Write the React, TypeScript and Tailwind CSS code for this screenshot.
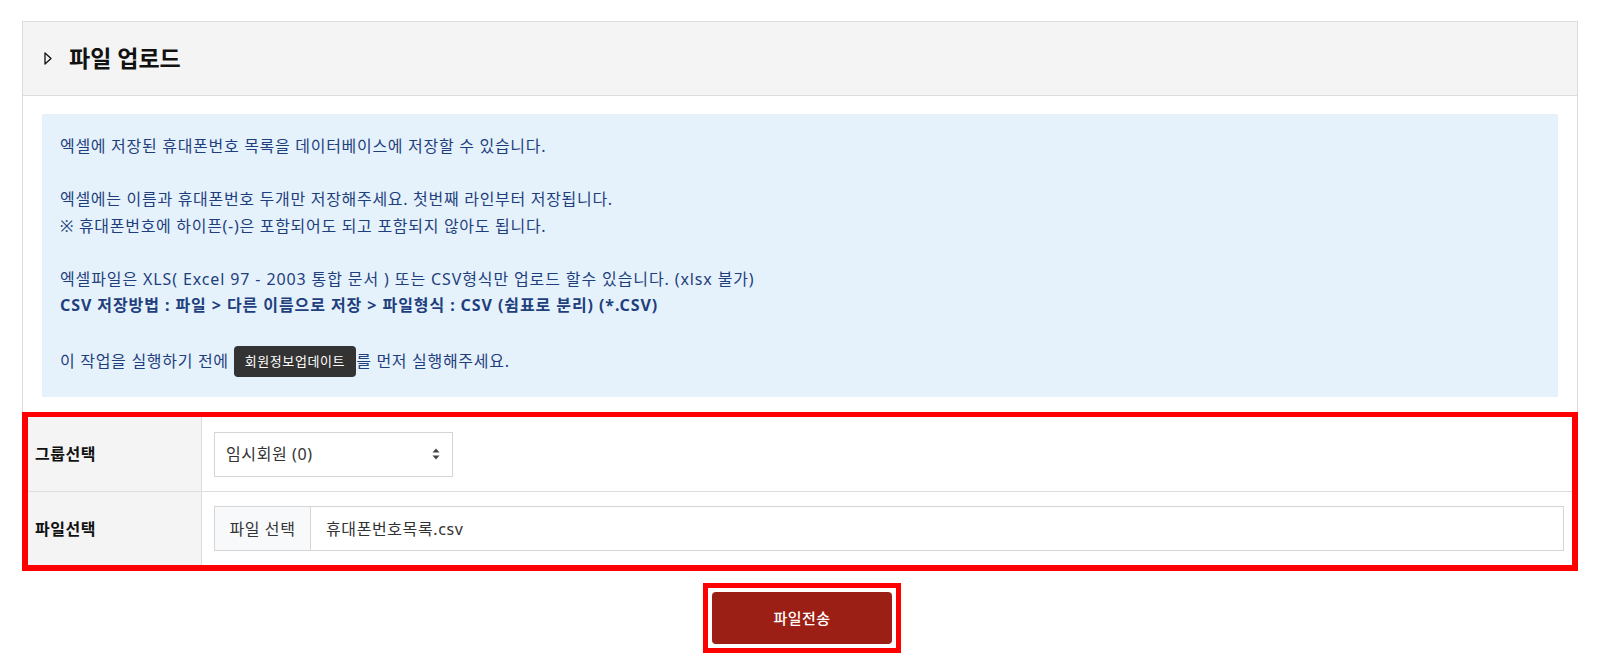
import React from "react";

export default function App() {
  const font = { fontFamily: '"Noto Sans", "Noto Sans CJK KR", sans-serif' };
  return (
    <div className="min-h-[667px] bg-white pt-[21px] px-[22px] pb-[13px]" style={font}>
      <div className="border-x border-t border-[#dddddd]">
        <div className="flex h-[74px] items-center gap-[17px] border-b border-[#dddddd] bg-[#f4f4f4] pl-[21px]">
          <svg width="8" height="13" viewBox="0 0 8 13" className="shrink-0">
            <path d="M1 1 L7 6.5 L1 12 Z" fill="none" stroke="#111" strokeWidth="1.3" strokeLinejoin="round" />
          </svg>
          <h2 className="text-[23px] font-bold text-[#111]">파일 업로드</h2>
        </div>
        <div className="px-[19px] pt-[18px] pb-[15px]">
          <div className="bg-[#e5f2fc] px-[18px] pt-[19px] pb-[20px] text-[16px] leading-[26.5px] tracking-[0.7px] text-[#1f3f7c]">
            <p>엑셀에 저장된 휴대폰번호 목록을 데이터베이스에 저장할 수 있습니다.</p>
            <p className="h-[26.5px]"></p>
            <p>엑셀에는 이름과 휴대폰번호 두개만 저장해주세요. 첫번째 라인부터 저장됩니다.</p>
            <p>※ 휴대폰번호에 하이픈(-)은 포함되어도 되고 포함되지 않아도 됩니다.</p>
            <p className="h-[26.5px]"></p>
            <p className="tracking-[0.88px]">엑셀파일은 XLS( Excel 97 - 2003 통합 문서 ) 또는 CSV형식만 업로드 할수 있습니다. (xlsx 불가)</p>
            <p className="font-bold tracking-[0.92px]">CSV 저장방법 : 파일 &gt; 다른 이름으로 저장 &gt; 파일형식 : CSV (쉼표로 분리) (*.CSV)</p>
            <p className="h-[26.5px]"></p>
            <p className="flex items-center h-[31px] mt-[1px]">
              <span>이 작업을 실행하기 전에&nbsp;</span>
              <button className="h-[31px] rounded-[4px] bg-[#333333] px-[11px] text-[13px] tracking-[0.6px] text-white">회원정보업데이트</button>
              <span>를 먼저 실행해주세요.</span>
            </p>
          </div>
        </div>
      </div>
      <div className="border-[6px] border-t-[5px] border-[#ff0000]">
        <div className="flex h-[75px] border-b border-[#dddddd]">
          <div className="flex w-[174px] items-center bg-[#f4f4f4] pl-[7px] text-[16px] tracking-[0.5px] font-bold text-[#111] border-r border-[#dddddd]">
            그룹선택
          </div>
          <div className="flex flex-1 items-center pl-[12px] pr-[8px]">
            <div className="flex h-[45px] w-[239px] items-center justify-between border border-[#d5d5d5] bg-white pl-[11px] pr-[12px] text-[16px] tracking-[0.6px] text-[#333]">
              <span>임시회원 (0)</span>
              <svg width="8" height="12" viewBox="0 0 8 12">
                <path d="M4 0.5 L7.5 4.5 L0.5 4.5 Z" fill="#444" />
                <path d="M4 11.5 L7.5 7.5 L0.5 7.5 Z" fill="#444" />
              </svg>
            </div>
          </div>
        </div>
        <div className="flex h-[73px]">
          <div className="flex w-[174px] items-center bg-[#f4f4f4] pl-[7px] text-[16px] tracking-[0.5px] font-bold text-[#111] border-r border-[#dddddd]">
            파일선택
          </div>
          <div className="flex flex-1 items-center pl-[12px] pr-[8px]">
            <div className="flex h-[45px] flex-1 items-stretch border border-[#d5d5d5] bg-white text-[16px] tracking-[0.6px] text-[#333]">
              <div className="flex w-[96px] items-center justify-center border-r border-[#d5d5d5] bg-[#f8f9fa]">파일 선택</div>
              <div className="flex items-center pl-[15px]">휴대폰번호목록.csv</div>
            </div>
          </div>
        </div>
      </div>
      <div className="mt-[12px] flex justify-center pl-[4px]">
        <div className="border-[5px] border-[#ff0000] p-[4px]">
          <button className="h-[52px] w-[180px] rounded-[4px] bg-[#9c1f15] text-[15px] tracking-[0.5px] font-medium text-white">파일전송</button>
        </div>
      </div>
    </div>
  );
}
